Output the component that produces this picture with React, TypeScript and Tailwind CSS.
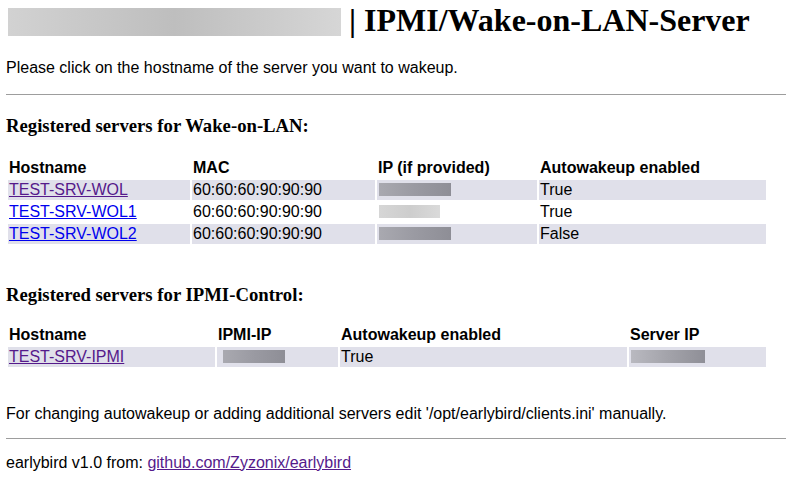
import React from 'react';

type Cell = { text?: string; link?: 'visited' | 'new'; blur?: { w: number; tone: 'dark' | 'light' | 'fade'; ml?: number } };

const wolCols = 'grid-cols-[182px_183px_160px_227px]';
const ipmiCols = 'grid-cols-[207px_121px_287px_137px]';

const wolRows: { shaded: boolean; cells: Cell[] }[] = [
  {
    shaded: true,
    cells: [{ text: 'TEST-SRV-WOL', link: 'visited' }, { text: '60:60:60:90:90:90' }, { blur: { w: 72, tone: 'dark' } }, { text: 'True' }],
  },
  {
    shaded: false,
    cells: [{ text: 'TEST-SRV-WOL1', link: 'new' }, { text: '60:60:60:90:90:90' }, { blur: { w: 61, tone: 'light' } }, { text: 'True' }],
  },
  {
    shaded: true,
    cells: [{ text: 'TEST-SRV-WOL2', link: 'new' }, { text: '60:60:60:90:90:90' }, { blur: { w: 72, tone: 'dark' } }, { text: 'False' }],
  },
];

const ipmiRows: { shaded: boolean; cells: Cell[] }[] = [
  {
    shaded: true,
    cells: [
      { text: 'TEST-SRV-IPMI', link: 'visited' },
      { blur: { w: 62, tone: 'dark', ml: 5 } },
      { text: 'True' },
      { blur: { w: 74, tone: 'fade' } },
    ],
  },
];

function Blur({ w, tone, ml = 1 }: { w: number; tone: 'dark' | 'light' | 'fade'; ml?: number }) {
  const tones = {
    dark: 'bg-linear-to-r from-[#a9a9b0] via-[#9a9aa2] to-[#8e8e96]',
    light: 'bg-linear-to-r from-[#d6d6d6] via-[#cdcdcd] to-[#dadada]',
    fade: 'bg-linear-to-r from-[#b9b9c0] via-[#a3a3aa] to-[#8f8f97]',
  };
  return <div className={`h-[13px] mt-[2px] blur-[0.5px] ${tones[tone]}`} style={{ width: w, marginLeft: ml }} />;
}

function Row({ cols, shaded, cells }: { cols: string; shaded: boolean; cells: Cell[] }) {
  return (
    <div className={`grid ${cols} gap-x-[2px]`}>
      {cells.map((c, i) => (
        <div key={i} className={`p-[1px] h-[20px] ${shaded ? 'bg-[#e0e0ea]' : ''}`}>
          {c.blur ? (
            <Blur w={c.blur.w} tone={c.blur.tone} ml={c.blur.ml} />
          ) : c.link ? (
            <a href="#" className={`underline ${c.link === 'visited' ? 'text-[#551a8b]' : 'text-[#0000ee]'}`}>
              {c.text}
            </a>
          ) : (
            c.text
          )}
        </div>
      ))}
    </div>
  );
}

function Table({ cols, head, rows }: { cols: string; head: string[]; rows: { shaded: boolean; cells: Cell[] }[] }) {
  return (
    <div className="flex flex-col gap-y-[2px] p-[2px] w-[762px]">
      <div className={`grid ${cols} gap-x-[2px]`}>
        {head.map((h) => (
          <div key={h} className="p-[1px] h-[20px] font-bold">
            {h}
          </div>
        ))}
      </div>
      {rows.map((r, i) => (
        <Row key={i} cols={cols} shaded={r.shaded} cells={r.cells} />
      ))}
    </div>
  );
}

export default function App() {
  return (
    <div className="min-h-[479px] bg-white text-black pl-[6px] font-['Liberation_Sans',Arial,sans-serif] text-[16px] leading-[normal] overflow-hidden">
      {/* title, hostname part blurred */}
      <h1 className="flex items-start mt-[2px] font-['Liberation_Serif','Times_New_Roman',serif] font-bold text-[32px] leading-[normal] whitespace-nowrap">
        <div className="mt-[6px] ml-[2px] mr-[8px] w-[333px] h-[28px] shrink-0 blur-[0.6px] bg-linear-to-r from-[#d2d2d2] via-[#bebebe] to-[#d6d6d6]" />
        <span>| IPMI/Wake-on-LAN-Server</span>
      </h1>

      <p className="mt-[19.5px]">Please click on the hostname of the server you want to wakeup.</p>

      <hr className="mt-[17.5px] border-t border-[#9d9d9d]" />

      <h3 className="mt-[19.6px] font-['Liberation_Serif','Times_New_Roman',serif] font-bold text-[18.72px] leading-[normal]">
        Registered servers for Wake-on-LAN:
      </h3>
      <div className="mt-[19.9px]">
        <Table cols={wolCols} head={['Hostname', 'MAC', 'IP (if provided)', 'Autowakeup enabled']} rows={wolRows} />
      </div>

      <h3 className="mt-[37.6px] font-['Liberation_Serif','Times_New_Roman',serif] font-bold text-[18.72px] leading-[normal]">
        Registered servers for IPMI-Control:
      </h3>
      <div className="mt-[17.2px]">
        <Table cols={ipmiCols} head={['Hostname', 'IPMI-IP', 'Autowakeup enabled', 'Server IP']} rows={ipmiRows} />
      </div>

      <p className="mt-[35.7px]">
        For changing autowakeup or adding additional servers edit '/opt/earlybird/clients.ini' manually.
      </p>

      <hr className="mt-[15.3px] border-t border-[#9d9d9d]" />

      <p className="mt-[14.3px]">
        earlybird v1.0 from:{' '}
        <a href="#" className="underline text-[#551a8b]">
          github.com/Zyzonix/earlybird
        </a>
      </p>
    </div>
  );
}
